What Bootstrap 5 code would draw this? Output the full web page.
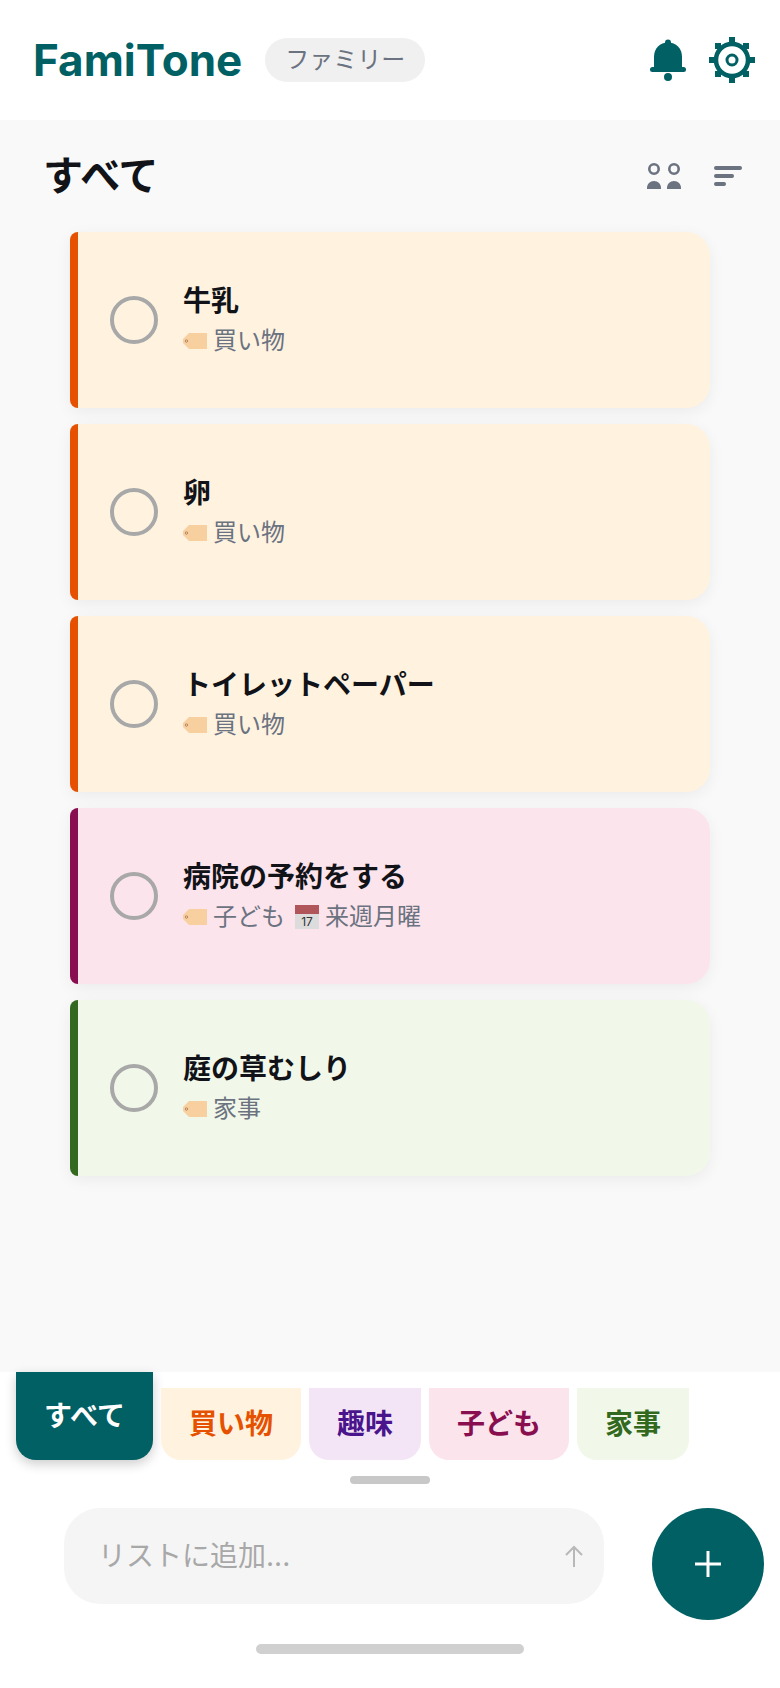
<!DOCTYPE html>
<html lang="ja">
<head>
  <meta charset="UTF-8">
  <title>FamiTone</title>
  <link href="https://cdn.jsdelivr.net/npm/bootstrap@5.3.3/dist/css/bootstrap.min.css" rel="stylesheet">
  <style>
    body {
      font-family: Inter, "Noto Sans CJK JP", sans-serif;
      background: #fff;
      color: #111318;
    }
    .app-shell { width: 780px; height: 1688px; }
    .app-header { height: 120px; padding: 0 25px 0 33px; }
    .brand-name { font-size: 44px; font-weight: 700; color: #006064; line-height: 1; margin-right: 23px; }
    .plan-pill { background: #f0f0f0; color: #6b7280; font-size: 24px; line-height: 44px; padding: 0 20px; border-radius: 22px; }
    .head-icons { gap: 23px; }
    .list-area { background: #f9f9f9; }
    .list-head { height: 112px; padding: 0 38px 0 43px; }
    .list-title { font-size: 40px; font-weight: 700; margin: 0; line-height: 1; }
    .list-tools { gap: 33px; }
    .task-list { margin: 0 70px; gap: 16px; }
    .task-card {
      height: 176px;
      border: 0;
      border-left: 8px solid;
      border-radius: 8px 24px 24px 8px;
      padding-left: 32px;
      box-shadow: 0 4px 16px rgba(0,0,0,0.06);
    }
    .task-shop { background: #fff3e0; border-color: #e65100; }
    .task-kids { background: #fce4ec; border-color: #880e4f; }
    .task-home { background: #f1f8e9; border-color: #33691e; }
    .check-ring { width: 48px; height: 48px; border: 4px solid #a8a8a8; border-radius: 50%; margin-right: 25px; flex: none; }
    .task-name { font-size: 28px; font-weight: 700; line-height: 40px; }
    .task-meta { font-size: 24px; line-height: 36px; color: #6b7280; margin-top: 2px; }
    .tag-ico { margin-right: 6px; }
    .cal-ico { margin: 0 6px 0 10px; }
    .tab-row { padding-left: 16px; gap: 8px; height: 88px; }
    .tab-item {
      font-size: 28px;
      font-weight: 700;
      height: 72px;
      padding: 0 28px;
      border: 0;
      border-radius: 0 0 20px 20px;
      line-height: 1;
    }
    .tab-active { height: 88px; background: #006064; color: #fff; box-shadow: 0 4px 12px rgba(0,0,0,0.2); }
    .tab-shop { background: #fff3e0; color: #e65100; }
    .tab-hobby { background: #f3e5f5; color: #4a148c; }
    .tab-kids { background: #fce4ec; color: #880e4f; }
    .tab-home { background: #f1f8e9; color: #33691e; }
    .drag-handle { width: 80px; height: 8px; background: #c8c8c8; border-radius: 4px; margin: 16px auto 24px; }
    .add-row { padding: 0 16px 0 64px; }
    .add-box { width: 540px; height: 96px; background: #f5f5f5; border-radius: 36px; padding: 0 20px 0 34px; }
    .add-input {
      background: transparent;
      border: 0;
      padding: 0;
      font-size: 28px;
      box-shadow: none;
    }
    .add-input::placeholder { color: #a8a8a8; opacity: 1; }
    .add-fab {
      width: 112px;
      height: 112px;
      background: #006064;
      border: 0;
      border-radius: 50%;
      padding: 0;
    }
    .home-bar { width: 268px; height: 10px; background: #d0d0d0; border-radius: 5px; margin: 24px auto 0; }
  </style>
</head>
<body>

  <div class="app-shell d-flex flex-column">
    <header class="app-header d-flex align-items-center">
      <span class="brand-name">FamiTone</span>
      <span class="plan-pill">ファミリー</span>
      <div class="head-icons d-flex align-items-center ms-auto">
        <svg width="36" height="42" viewBox="0 0 36 42" fill="#006064">
          <circle cx="18" cy="3.5" r="3"/>
          <path d="M4 30V18C4 9 10 3.500 18 3.500S32 9 32 18V30Z"/>
          <rect x="0" y="28" width="36" height="5" rx="2.500"/>
          <circle cx="18" cy="38" r="4"/>
        </svg>
        <svg width="46" height="46" viewBox="0 0 46 46" fill="none" stroke="#006064">
          <circle cx="23" cy="23" r="16" stroke-width="4.500"/>
          <circle cx="23" cy="23" r="5" stroke-width="3"/>
          <g fill="#006064" stroke="none">
            <rect x="20" y="0" width="6" height="7"/>
            <rect x="20" y="39" width="6" height="7"/>
            <rect x="0" y="20" width="7" height="6"/>
            <rect x="39" y="20" width="7" height="6"/>
            <rect x="6" y="6" width="6" height="6"/>
            <rect x="34" y="6" width="6" height="6"/>
            <rect x="6" y="34" width="6" height="6"/>
            <rect x="34" y="34" width="6" height="6"/>
          </g>
        </svg>
      </div>
    </header>

    <main class="list-area flex-grow-1">
      <div class="list-head d-flex align-items-center justify-content-between">
        <h1 class="list-title">すべて</h1>
        <div class="list-tools d-flex align-items-center">
          <svg width="34" height="26" viewBox="0 0 34 26" fill="#6b7280">
            <circle cx="7" cy="6" r="4.700" fill="none" stroke="#6b7280" stroke-width="2.600"/>
            <circle cx="27" cy="6" r="4.700" fill="none" stroke="#6b7280" stroke-width="2.600"/>
            <path d="M0 26V25C0 21 3 18 7 18S14 21 14 25V26Z"/>
            <path d="M20 26V25C20 21 23 18 27 18S34 21 34 25V26Z"/>
          </svg>
          <svg width="28" height="20" viewBox="0 0 28 20" fill="#6b7280">
            <rect x="0" y="0" width="28" height="4" rx="2"/>
            <rect x="0" y="8" width="20" height="4" rx="2"/>
            <rect x="0" y="16" width="12" height="4" rx="2"/>
          </svg>
        </div>
      </div>

      <div class="task-list d-flex flex-column">
        <div class="card task-card task-shop flex-row align-items-center">
          <span class="check-ring"></span>
          <div>
            <div class="task-name">牛乳</div>
            <div class="task-meta d-flex align-items-center">
              <svg class="tag-ico" width="24" height="16" viewBox="0 0 24 16"><path d="M6 0H24V16H6L0 10V6Z" fill="#f8cf9f"/><circle cx="3.500" cy="8" r="1.200" fill="none" stroke="#a5765a" stroke-width=".8"/></svg>買い物
            </div>
          </div>
        </div>
        <div class="card task-card task-shop flex-row align-items-center">
          <span class="check-ring"></span>
          <div>
            <div class="task-name">卵</div>
            <div class="task-meta d-flex align-items-center">
              <svg class="tag-ico" width="24" height="16" viewBox="0 0 24 16"><path d="M6 0H24V16H6L0 10V6Z" fill="#f8cf9f"/><circle cx="3.500" cy="8" r="1.200" fill="none" stroke="#a5765a" stroke-width=".8"/></svg>買い物
            </div>
          </div>
        </div>
        <div class="card task-card task-shop flex-row align-items-center">
          <span class="check-ring"></span>
          <div>
            <div class="task-name">トイレットペーパー</div>
            <div class="task-meta d-flex align-items-center">
              <svg class="tag-ico" width="24" height="16" viewBox="0 0 24 16"><path d="M6 0H24V16H6L0 10V6Z" fill="#f8cf9f"/><circle cx="3.500" cy="8" r="1.200" fill="none" stroke="#a5765a" stroke-width=".8"/></svg>買い物
            </div>
          </div>
        </div>
        <div class="card task-card task-kids flex-row align-items-center">
          <span class="check-ring"></span>
          <div>
            <div class="task-name">病院の予約をする</div>
            <div class="task-meta d-flex align-items-center">
              <svg class="tag-ico" width="24" height="16" viewBox="0 0 24 16"><path d="M6 0H24V16H6L0 10V6Z" fill="#f8cf9f"/><circle cx="3.500" cy="8" r="1.200" fill="none" stroke="#a5765a" stroke-width=".8"/></svg>子ども
              <svg class="cal-ico" width="24" height="24" viewBox="0 0 24 24">
                <rect width="24" height="24" fill="#dcdcdc"/>
                <rect width="24" height="9" fill="#b0555a"/>
                <text x="12" y="21" text-anchor="middle" font-size="12" font-family="Inter, sans-serif" fill="#333">17</text>
              </svg>来週月曜
            </div>
          </div>
        </div>
        <div class="card task-card task-home flex-row align-items-center">
          <span class="check-ring"></span>
          <div>
            <div class="task-name">庭の草むしり</div>
            <div class="task-meta d-flex align-items-center">
              <svg class="tag-ico" width="24" height="16" viewBox="0 0 24 16"><path d="M6 0H24V16H6L0 10V6Z" fill="#f8cf9f"/><circle cx="3.500" cy="8" r="1.200" fill="none" stroke="#a5765a" stroke-width=".8"/></svg>家事
            </div>
          </div>
        </div>
      </div>
    </main>

    <footer>
      <div class="tab-row d-flex align-items-start">
        <button class="btn tab-item tab-active">すべて</button>
        <button class="btn tab-item tab-shop mt-3">買い物</button>
        <button class="btn tab-item tab-hobby mt-3">趣味</button>
        <button class="btn tab-item tab-kids mt-3">子ども</button>
        <button class="btn tab-item tab-home mt-3">家事</button>
      </div>
      <div class="drag-handle"></div>
      <div class="add-row d-flex align-items-start justify-content-between">
        <div class="add-box d-flex align-items-center">
          <input class="form-control add-input" type="text" placeholder="リストに追加...">
          <svg class="flex-shrink-0" width="20" height="22" viewBox="0 0 20 22" fill="none" stroke="#b8b8b8" stroke-width="2">
            <path d="M10 22V2M2 10L10 2L18 10"/>
          </svg>
        </div>
        <button class="btn add-fab d-flex align-items-center justify-content-center">
          <svg width="26" height="26" viewBox="0 0 26 26" stroke="#fff" stroke-width="3">
            <path d="M13 0V26M0 13H26"/>
          </svg>
        </button>
      </div>
      <div class="home-bar"></div>
      <div style="height: 34px"></div>
    </footer>
  </div>

</body>
</html>
